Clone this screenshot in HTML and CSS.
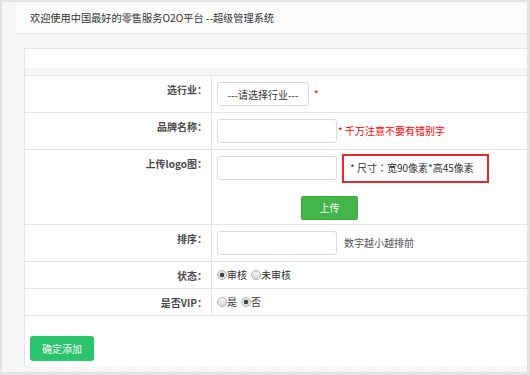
FILE: index.html
```html
<!DOCTYPE html>
<html lang="zh-CN">
<head>
    <meta charset="UTF-8">
    <meta name="viewport" content="width=device-width, initial-scale=1.0">
    <title>超级管理系统</title>
    <link rel="stylesheet" href="styles.css">
</head>
<body>
    <div class="frame">
        <!-- top bar -->
        <div class="top">欢迎使用中国最好的零售服务O2O平台 --超级管理系统</div>
        <!-- main panel -->
        <div class="main">
            <form action="#" class="panel">
                <div class="panel-head"></div>
                <table class="form-table">
                    <tr>
                        <td class="label">选行业<span class="colon">：</span></td>
                        <td class="value">
                            <div class="line">
                                <select class="select" name="industry">
                                    <option>---请选择行业---</option>
                                </select>
                                <span class="req">*</span>
                            </div>
                        </td>
                    </tr>
                    <tr>
                        <td class="label">品牌名称<span class="colon">：</span></td>
                        <td class="value">
                            <div class="line">
                                <input type="text" class="text-input" name="brand">
                                <span class="hint-red">* 千万注意不要有错别字</span>
                            </div>
                        </td>
                    </tr>
                    <tr>
                        <td class="label">上传logo图<span class="colon">：</span></td>
                        <td class="value value-upload">
                            <div class="line">
                                <input type="text" class="text-input" name="logo">
                                <span class="size-box">* 尺寸<span class="colon">：</span>宽90像素*高45像素</span>
                            </div>
                            <a href="#" class="btn btn-upload">上传</a>
                        </td>
                    </tr>
                    <tr>
                        <td class="label">排序<span class="colon">：</span></td>
                        <td class="value">
                            <div class="line">
                                <input type="text" class="text-input" name="sort">
                                <span class="note">数字越小越排前</span>
                            </div>
                        </td>
                    </tr>
                    <tr>
                        <td class="label">状态<span class="colon">：</span></td>
                        <td class="value">
                            <div class="radios">
                                <label class="choice"><input type="radio" class="radio" name="status" checked>审核</label>
                                <label class="choice"><input type="radio" class="radio" name="status">未审核</label>
                            </div>
                        </td>
                    </tr>
                    <tr>
                        <td class="label">是否VIP<span class="colon">：</span></td>
                        <td class="value">
                            <div class="radios">
                                <label class="choice"><input type="radio" class="radio" name="vip">是</label>
                                <label class="choice"><input type="radio" class="radio" name="vip" checked>否</label>
                            </div>
                        </td>
                    </tr>
                </table>
                <div class="actions">
                    <a href="#" class="btn btn-submit">确定添加</a>
                </div>
            </form>
        </div>
    </div>
</body>
</html>
```

FILE: styles.css
```css
*{
    box-sizing: border-box;
    font-family: "Noto Sans CJK SC", "Microsoft YaHei", sans-serif;
}
body{
    margin: 0;
    background: #fff;
}
.frame{
    width: 530px;
    height: 375px;
    display: flex;
    flex-direction: column;
    border: 2px solid #e3e3e3;
    border-right-width: 3px;
    border-bottom-width: 3px;
    background: repeating-conic-gradient(#f4f4f4 0 25%, #f9f9f9 0 50%) 0 0 / 3px 3px;
}
/* top bar */
.top{
    height: 32px;
    margin-left: 14px;
    padding-left: 14px;
    line-height: 31px;
    font-size: 10.2px;
    color: #333;
    background: #fcfcfc;
    border-bottom: 1px solid #dfe6ec;
}
.main{
    flex: 1;
    padding: 14px 0 6px 22px;
}
.panel{
    height: 100%;
    margin: 0;
    padding-top: 19px;
    background: #fff;
    border-top: 1px solid #e5e5e5;
    border-left: 1px solid #e5e5e5;
}
.panel-head{
    height: 8px;
    background: #f6f6f6;
    border-bottom: 1px solid #e5e5e5;
}
/* form table */
.form-table{
    width: 100%;
    border-spacing: 0;
    font-size: 10px;
    color: #333;
}
.form-table td{
    vertical-align: top;
    line-height: 14px;
    border-bottom: 1px solid #e5e5e5;
}
.label{
    width: 187px;
    padding: 7px 4px 5px 0;
    text-align: right;
    font-weight: bold;
    color: #4a4a4a;
    border-right: 1px solid #e6e6e6;
}
/* centred full-width colon */
.colon{
    font-family: "Noto Sans CJK JP", "Noto Sans CJK SC", sans-serif;
}
.value{
    padding: 6px 5px;
}
.value-upload{
    padding-bottom: 4px;
}
.line{
    display: flex;
    align-items: center;
    height: 24px;
}
.text-input, .select{
    height: 24px;
    border: 1px solid #dcdcdc;
    border-radius: 3px;
    background: #fff;
    font-size: 10px;
    color: #333;
}
.text-input{
    width: 120px;
    padding: 0 4px;
}
.select{
    width: 92px;
    padding: 0;
    appearance: none;
    text-align: center;
    text-align-last: center;
}
.req{
    margin-left: 5px;
    color: #f00;
}
.hint-red{
    margin-left: 1px;
    color: #f00;
}
.size-box{
    display: flex;
    align-items: center;
    flex: none;
    width: 147px;
    height: 29px;
    margin-left: 5px;
    padding-left: 6px;
    border: 2px solid #e8262b;
    color: #333;
}
.note{
    margin-left: 7px;
    color: #555;
}
.radios{
    display: flex;
    align-items: center;
    gap: 4px;
    height: 14px;
}
.choice{
    display: flex;
    align-items: center;
}
.radio{
    appearance: none;
    width: 10px;
    height: 10px;
    margin: 0;
    border: 1px solid #b4b4b4;
    border-radius: 50%;
    background: linear-gradient(#f4f4f4, #d9d9d9);
}
.radio:checked{
    background: radial-gradient(circle, #444 0 2px, #e2e2e2 2.6px);
}
/* buttons */
.btn{
    display: flex;
    justify-content: center;
    align-items: center;
    text-decoration: none;
    color: #fff;
    font-size: 10px;
}
.btn-upload{
    width: 57px;
    height: 24px;
    margin: 16px 0 0 84px;
    background: #43b64a;
    border: 1px solid #3aa741;
    border-radius: 2px;
}
.actions{
    padding: 20px 0 0 5px;
}
.btn-submit{
    width: 64px;
    height: 25px;
    background: #29c46c;
    border-radius: 3px;
}
```
